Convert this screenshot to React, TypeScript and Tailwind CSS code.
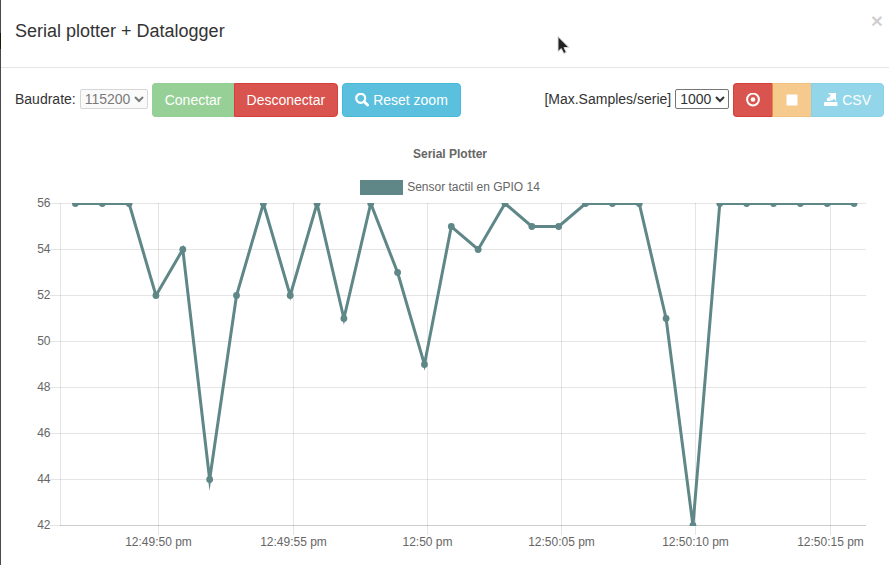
import React from "react";

const SAMPLES = [
  56, 56, 56, 52, 54, 44, 52, 56, 52, 56, 51, 56, 53, 49, 55,
  54, 56, 55, 55, 56, 56, 56, 51, 42, 56, 56, 56, 56, 56, 56,
];
const Y_TICKS = [56, 54, 52, 50, 48, 46, 44, 42];
const X_TICKS = [
  { x: 142.5, label: "12:49:50 pm" },
  { x: 277.5, label: "12:49:55 pm" },
  { x: 411.5, label: "12:50 pm" },
  { x: 545.5, label: "12:50:05 pm" },
  { x: 679.5, label: "12:50:10 pm" },
  { x: 814.5, label: "12:50:15 pm" },
];
const SERIES_COLOR = "#5f8787";
const yOf = (v: number) => 8.5 + (56 - v) * 23;
const xOf = (i: number) => 59.4 + i * 26.85;

function SearchIcon() {
  return (
    <svg width="14" height="14" viewBox="0 0 14 14" fill="none" stroke="currentColor" aria-hidden="true">
      <circle cx="5.7" cy="5.3" r="4.5" strokeWidth="2.2" />
      <path d="M9.200 8.800 12.600 12.100" strokeWidth="2.800" strokeLinecap="round" />
    </svg>
  );
}

function RecordIcon() {
  return (
    <svg width="14" height="14" viewBox="0 0 14 14" fill="none" aria-hidden="true">
      <circle cx="7" cy="6.500" r="5.900" stroke="currentColor" strokeWidth="2" />
      <circle cx="7" cy="6.500" r="2.300" fill="currentColor" />
    </svg>
  );
}

function StopIcon() {
  return (
    <svg width="14" height="14" viewBox="0 0 14 14" aria-hidden="true">
      <path d="M1.500 1.500h11v11h-11z" fill="currentColor" />
    </svg>
  );
}

function ExportIcon() {
  return (
    <svg width="14" height="14" viewBox="0 0 14 14" fill="currentColor" aria-hidden="true">
      <path d="M0 9.600q0-.6.6-.6h12.200q.6 0 .6.6V13H0z" />
      <path d="M4 0h8v8L9.800 5.800 7.900 7.700 5 4.600 6.800 2.800z" />
      <path d="M4.300 4.200 3 5.500V8h3.500L7 7z" />
    </svg>
  );
}

function Chart() {
  const points = SAMPLES.map((v, i) => `${xOf(i)},${yOf(v)}`).join(" ");
  return (
    <svg viewBox="0 0 868 370" className="block w-full" role="img" aria-label="Serial Plotter">
      <defs>
        <clipPath id="plot-area">
          <rect x="44" y="8" width="807" height="323" />
        </clipPath>
      </defs>
      <g stroke="#000" strokeOpacity="0.1">
        {Y_TICKS.map((v) => (
          <path key={v} d={`M34 ${yOf(v)}H850`} />
        ))}
        {X_TICKS.map((t) => (
          <path key={t.x} d={`M${t.x} 8V340`} />
        ))}
        <path d="M44.500 8V331" />
        <path d="M44 330.500H850" />
      </g>
      <g clipPath="url(#plot-area)" fill={SERIES_COLOR}>
        <polyline points={points} fill="none" stroke={SERIES_COLOR} strokeWidth="3" strokeMiterlimit="10" />
        {SAMPLES.map((v, i) => (
          <circle key={i} cx={xOf(i)} cy={yOf(v)} r="3.4" />
        ))}
      </g>
      <g fill="#666" fontSize="12">
        {Y_TICKS.map((v) => (
          <text key={v} x="34.500" y={yOf(v) + 3.5} textAnchor="end">{v}</text>
        ))}
        {X_TICKS.map((t) => (
          <text key={t.x} x={t.x} y="351" textAnchor="middle">{t.label}</text>
        ))}
      </g>
    </svg>
  );
}

export default function App() {
  return (
    <div className="relative flex min-h-screen bg-white font-['Liberation_Sans',Arial,sans-serif] text-sm leading-5 text-[#333]">
      <div className="w-px shrink-0 bg-[#4a4a4c] pt-[33px]">
        <div className="h-4 bg-[#1c1a08]" />
      </div>
      <main className="min-w-0 flex-1">
        <header className="flex h-[68px] items-start justify-between border-b border-[#e5e5e5] pr-[6px] pl-[14px]">
          <h4 className="pt-[18px] text-lg leading-[26px]">Serial plotter + Datalogger</h4>
          <button type="button" aria-label="Close" className="pt-[10px] text-[21px] leading-[21px] font-bold text-black/20">×</button>
        </header>
        <section className="pt-[15px] pr-[5px] pl-[14px]">
          <div className="flex flex-wrap items-center justify-between gap-y-2">
            <div className="flex items-center gap-1">
              <label htmlFor="baud" className="-mt-0.5">Baudrate:</label>
              <select id="baud" disabled className="-mt-0.5 h-5 w-[68px] rounded-[2px] border border-[#d6d6d6] bg-[#fafafa] text-[#7a7a7a]">
                <option>115200</option>
              </select>
              <div className="flex">
                <button type="button" disabled className="h-[34px] rounded-l border border-r-0 border-[#94cf94] bg-[#96d096] px-3 text-white">Conectar</button>
                <button type="button" className="h-[34px] rounded-r border border-[#d43f3a] bg-[#d9534f] px-3 text-white">Desconectar</button>
              </div>
              <button type="button" className="flex h-[34px] items-center gap-1 rounded border border-[#46b8da] bg-[#5bc0de] px-3 text-white">
                <SearchIcon />
                Reset zoom
              </button>
            </div>
            <div className="flex items-center gap-1">
              <label htmlFor="samples" className="-mt-0.5">[Max.Samples/serie]</label>
              <select id="samples" className="-mt-0.5 h-5 w-[54px] rounded-[2px] border border-[#767676] bg-white text-[#333]">
                <option>1000</option>
              </select>
              <div className="flex text-white">
                <button type="button" aria-label="Record" className="h-[34px] rounded-l border border-r-0 border-[#d43f3a] bg-[#d9534f] px-3">
                  <RecordIcon />
                </button>
                <button type="button" disabled aria-label="Stop" className="h-[34px] border border-r-0 border-[#f2c17f] border-l-[#e38b3d] bg-[#f6ca8d] px-3">
                  <StopIcon />
                </button>
                <button type="button" disabled className="flex h-[34px] items-center gap-1 rounded-r border border-[#87d0e5] bg-[#94d6e9] px-3">
                  <ExportIcon />
                  CSV
                </button>
              </div>
            </div>
          </div>
          <div className="pt-[29px] pl-px text-xs leading-4 text-[#666]">
            <h5 className="text-center font-bold">Serial Plotter</h5>
            <div className="flex items-center justify-center gap-1 pt-[17px]">
              <span className="h-[15px] w-[43px] bg-[#5f8787]" />
              <span>Sensor tactil en GPIO 14</span>
            </div>
            <Chart />
          </div>
        </section>
      </main>
      <svg className="absolute top-[35px] left-[556px]" width="16" height="22" viewBox="0 0 16 22" aria-hidden="true">
        <path d="M2 1.500V16.500l3.300-2.900 2.500 4.900 2.500-1.200-2.300-4.700h5z" fill="#222" stroke="#ddd" strokeWidth="1" />
      </svg>
    </div>
  );
}
